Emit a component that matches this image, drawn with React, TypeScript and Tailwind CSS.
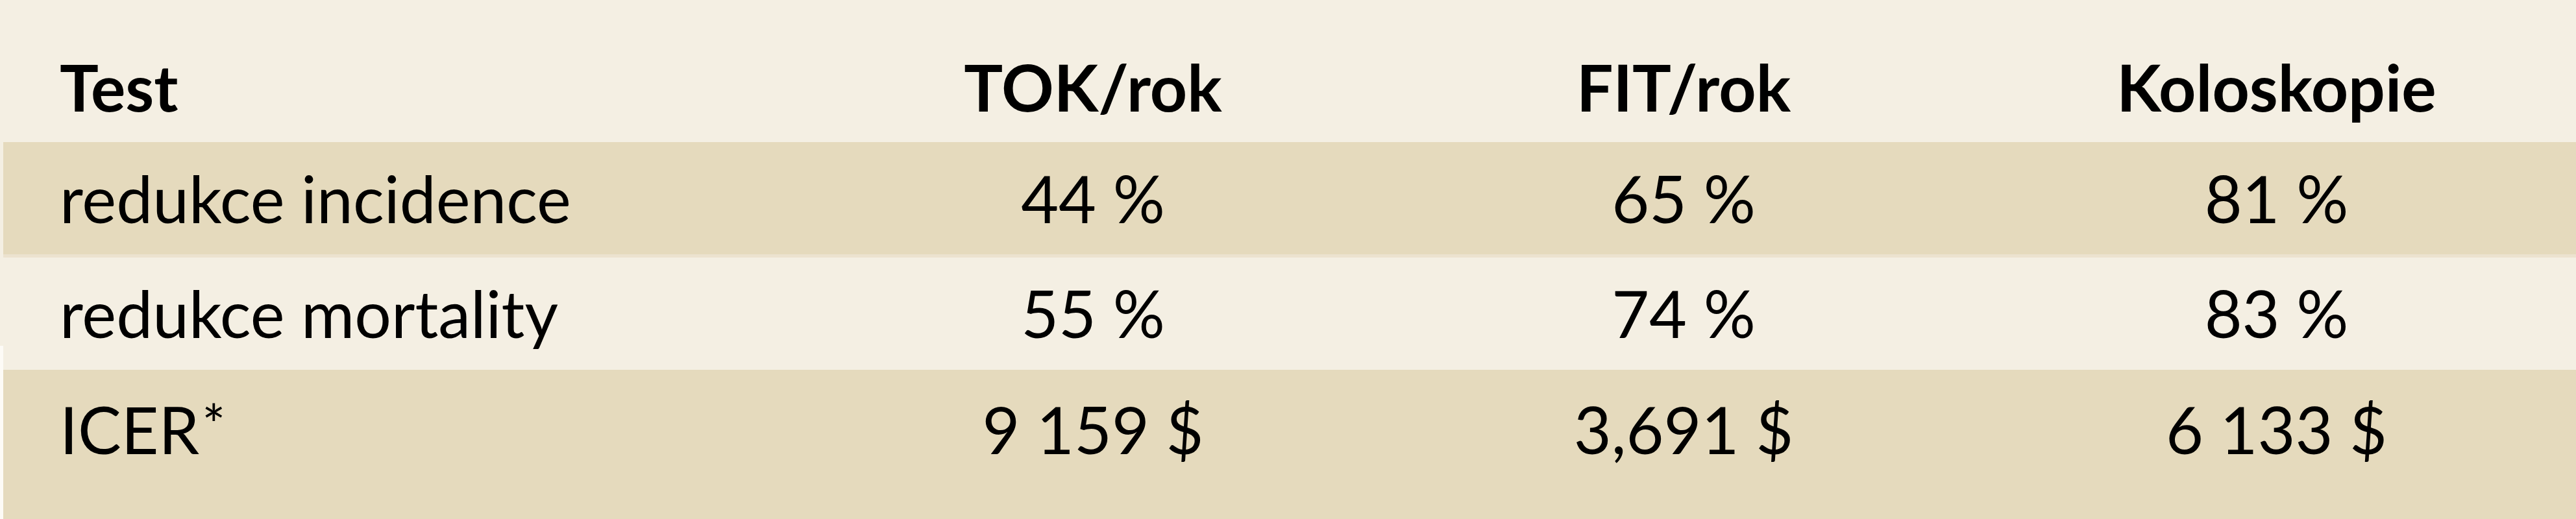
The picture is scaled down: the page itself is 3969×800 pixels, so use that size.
const rows = [
  { label: "redukce incidence", values: ["44 %", "65 %", "81 %"] },
  { label: "redukce mortality", values: ["55 %", "74 %", "83 %"] },
];

const cols = "grid grid-cols-[1221px_916px_904px_1fr]";

export default function App() {
  return (
    <div className="flex h-[800px] w-[3969px] bg-[#f4efe3] font-['Lato',sans-serif] text-[100px] leading-[120px] text-black">
      <div className="flex w-[5px] shrink-0 flex-col">
        <div className="h-[533px] bg-[#f4efe3]" />
        <div className="flex-1 bg-[#fdfbf6]" />
      </div>

      <div className="flex flex-1 flex-col">
        <div className={`${cols} bg-[#f4efe3] pt-[73px] pb-[26px] font-bold`}>
          <div className="pl-[87px]">Test</div>
          <div className="text-center">TOK/rok</div>
          <div className="text-center">FIT/rok</div>
          <div className="text-center">Koloskopie</div>
        </div>

        <div className={`${cols} bg-[#e5dabd] pt-[26px] pb-[27px]`}>
          <div className="pl-[87px]">{rows[0].label}</div>
          {rows[0].values.map((v) => (
            <div key={v} className="text-center">{v}</div>
          ))}
        </div>

        <div className={`${cols} border-t-[5px] border-[#ece3cf] bg-[#f4efe3] pt-[25px] pb-[28px]`}>
          <div className="pl-[87px]">{rows[1].label}</div>
          {rows[1].values.map((v) => (
            <div key={v} className="text-center">{v}</div>
          ))}
        </div>

        <div className={`${cols} flex-1 bg-[#e5dabd] pt-[31px]`}>
          <div className="pl-[87px]">
            ICER<span className="ml-[4px] align-[14px] text-[85px] leading-none">*</span>
          </div>
          <div className="text-center">9 159 $</div>
          <div className="text-center">3,691 $</div>
          <div className="text-center">6 133 $</div>
        </div>
      </div>
    </div>
  );
}
